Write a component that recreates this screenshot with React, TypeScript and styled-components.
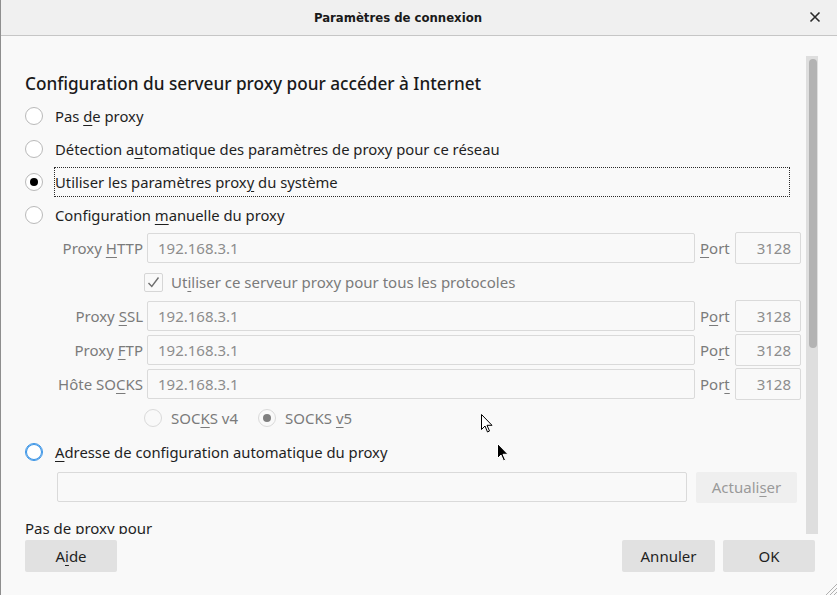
import React from 'react';
import styled, { createGlobalStyle } from 'styled-components';

const GlobalStyle = createGlobalStyle`
  html, body {
    margin: 0;
    padding: 0;
    background: #f9f9f9;
  }
  body {
    font-family: 'Noto Sans', 'DejaVu Sans', sans-serif;
    font-size: 15px;
    color: #1f1f1f;
    overflow: hidden;
  }
`;

interface IField {
  before: string;
  key: string;
  after: string;
  port: [string, string, string];
}

const FIELDS: IField[] = [
  { before: 'Proxy ', key: 'H', after: 'TTP', port: ['', 'P', 'ort'] },
  { before: 'Proxy ', key: 'S', after: 'SL', port: ['P', 'o', 'rt'] },
  { before: 'Proxy ', key: 'F', after: 'TP', port: ['Po', 'r', 't'] },
  { before: 'Hôte SO', key: 'C', after: 'KS', port: ['Por', 't', ''] },
];

const App: React.FC = () => {
  const renderField = (f: IField) => (
    <FieldRow key={f.before + f.key}>
      <FieldLabel>
        {f.before}
        <Key>{f.key}</Key>
        {f.after}
      </FieldLabel>
      <TextInput readOnly value="192.168.3.1" />
      <PortLabel>
        {f.port[0]}
        <Key>{f.port[1]}</Key>
        {f.port[2]}
      </PortLabel>
      <PortInput readOnly value="3128" />
    </FieldRow>
  );

  return (
    <Window>
      <GlobalStyle />
      <TitleBar>
        <Title>Paramètres de connexion</Title>
        <CloseButton>
          <svg width="12" height="12" viewBox="0 0 12 12">
            <path d="M1.5 1.5 L10.5 10.5 M10.5 1.5 L1.5 10.5" stroke="#2a2a2a" strokeWidth="1.6" />
          </svg>
        </CloseButton>
      </TitleBar>

      <Body>
        <ScrollView>
          <Heading>Configuration du serveur proxy pour accéder à Internet</Heading>

          <RadioRow>
            <Radio />
            <OptionLabel>
              Pas <Key>d</Key>e proxy
            </OptionLabel>
          </RadioRow>
          <RadioRow>
            <Radio />
            <OptionLabel>
              Détection a<Key>u</Key>tomatique des paramètres de proxy pour ce réseau
            </OptionLabel>
          </RadioRow>
          <RadioRow>
            <Radio $checked />
            <OptionLabel $focused>
              Utiliser les paramètres prox<Key>y</Key> du système
            </OptionLabel>
          </RadioRow>
          <RadioRow>
            <Radio />
            <OptionLabel>
              Configuration <Key>m</Key>anuelle du proxy
            </OptionLabel>
          </RadioRow>

          {renderField(FIELDS[0])}

          <CheckRow>
            <Checkbox>
              <svg width="13" height="13" viewBox="0 0 13 13">
                <path d="M1.5 7 L4.8 10.5 L11.5 1.5" fill="none" stroke="#6e6e6e" strokeWidth="1.4" />
              </svg>
            </Checkbox>
            <DimText>
              Ut<Key>i</Key>liser ce serveur proxy pour tous les protocoles
            </DimText>
          </CheckRow>

          {FIELDS.slice(1).map(renderField)}

          <SocksRow>
            <Radio $disabled />
            <DimText>
              SOC<Key>K</Key>S v4
            </DimText>
            <Radio $disabled $checked />
            <DimText>
              SOCKS <Key>v</Key>5
            </DimText>
          </SocksRow>

          <RadioRow>
            <Radio $hover />
            <OptionLabel>
              <Key>A</Key>dresse de configuration automatique du proxy
            </OptionLabel>
          </RadioRow>

          <PacRow>
            <PacInput readOnly value="" />
            <SmallButton disabled>
              Actuali<Key>s</Key>er
            </SmallButton>
          </PacRow>

          <SectionText>Pas de proxy pour</SectionText>
        </ScrollView>

        <ScrollTrack>
          <ScrollThumb />
        </ScrollTrack>
      </Body>

      <Footer>
        <Button>
          A<Key>i</Key>de
        </Button>
        <Spacer />
        <Button $wide>Annuler</Button>
        <Button>OK</Button>
      </Footer>

      <Cursor style={{ left: 480, top: 414 }}>
        <svg width="13" height="20" viewBox="0 0 13 20">
          <path d="M0.5 0.5 L0.5 15.5 L4 12 L6.5 18 L8.5 17 L6 11.3 L11 11.3 Z" fill="#fff" stroke="#000" strokeWidth="1" />
        </svg>
      </Cursor>
      <Cursor style={{ left: 496, top: 443 }}>
        <svg width="13" height="20" viewBox="0 0 13 20">
          <path d="M0.5 0.5 L0.5 15.5 L4 12 L6.5 18 L8.5 17 L6 11.3 L11 11.3 Z" fill="#000" stroke="#fff" strokeWidth="1" />
        </svg>
      </Cursor>

      <Grip>
        <svg width="12" height="12" viewBox="0 0 12 12">
          <path d="M12 1 L1 12 M12 5 L5 12 M12 9 L9 12" stroke="#b0b0b0" strokeWidth="1" />
        </svg>
      </Grip>
    </Window>
  );
};

const Window = styled.div`
  position: relative;
  width: 837px;
  height: 595px;
  box-sizing: border-box;
  border-left: 1px solid #8e8e8e;
  background: #f9f9f9;
  display: flex;
  flex-direction: column;
`;

const TitleBar = styled.div`
  height: 35px;
  flex: none;
  background: #f0f0f0;
  border-bottom: 1px solid #c6c6c6;
  display: flex;
  align-items: center;
  justify-content: center;
  position: relative;
  padding-right: 42px;
`;

const Title = styled.div`
  font-family: 'DejaVu Sans Condensed', 'DejaVu Sans', sans-serif;
  font-weight: bold;
  font-size: 13px;
  color: #1a1a1a;
`;

const CloseButton = styled.div`
  position: absolute;
  right: 16px;
  top: 11px;
  width: 12px;
  height: 12px;
  display: flex;
`;

const Body = styled.div`
  display: flex;
  padding-top: 20px;
  height: 478px;
  flex: none;
`;

const ScrollView = styled.div`
  flex: 1;
  overflow: hidden;
  padding: 0 5px 0 24px;
`;

const ScrollTrack = styled.div`
  width: 12px;
  background: #dedede;
  margin-right: 19px;
  padding: 3px 0 0 3px;
  box-sizing: border-box;
`;

const ScrollThumb = styled.div`
  width: 8px;
  height: 289px;
  border-radius: 4px;
  background: #b3b3b3;
`;

const Heading = styled.div`
  font-size: 17.2px;
  font-weight: 500;
  line-height: 24px;
  margin: 16px 0 3px;
  color: #1a1a1a;
`;

const Key = styled.span`
  text-decoration: underline;
  text-underline-offset: 3px;
  text-decoration-thickness: 1px;
`;

const RadioRow = styled.div`
  height: 33px;
  display: flex;
  align-items: center;
`;

const Radio = styled.span<{ $checked?: boolean; $disabled?: boolean; $hover?: boolean }>`
  flex: none;
  width: 18px;
  height: 18px;
  box-sizing: border-box;
  border-radius: 50%;
  background: ${(p) => (p.$disabled ? '#f9f9f9' : '#ffffff')};
  border: 1px solid ${(p) => (p.$hover ? '#3a94e6' : p.$disabled ? '#dadada' : '#b9b9b9')};
  ${(p) => (p.$hover ? 'box-shadow: inset 0 0 0 1px #3a94e6;' : '')}
  display: flex;
  align-items: center;
  justify-content: center;
  margin-right: 11px;
  &::after {
    content: '';
    display: ${(p) => (p.$checked ? 'block' : 'none')};
    width: 8px;
    height: 8px;
    border-radius: 50%;
    background: ${(p) => (p.$disabled ? '#7f7f7f' : '#000')};
  }
`;

const OptionLabel = styled.span<{ $focused?: boolean }>`
  flex: 1;
  height: 30px;
  margin-right: 11px;
  box-sizing: border-box;
  border: 1px dotted ${(p) => (p.$focused ? '#2a2a2a' : 'transparent')};
  display: flex;
  align-items: center;
  white-space: pre;
  color: #1f1f1f;
  font-size: 14.8px;
`;

const FieldRow = styled.div`
  height: 34px;
  display: flex;
  align-items: center;
`;

const FieldLabel = styled.span`
  width: 118px;
  flex: none;
  text-align: right;
  color: #7b7b7b;
  margin-right: 4px;
  white-space: pre;
`;

const TextInput = styled.input`
  flex: 1;
  min-width: 0;
  height: 30px;
  box-sizing: border-box;
  border: 1px solid #dadada;
  border-radius: 2px;
  background: #f9f9f9;
  padding: 0 10px;
  font: inherit;
  color: #8d8d8d;
  outline: none;
`;

const PortLabel = styled.span`
  width: 30px;
  flex: none;
  margin: 0 5px 0 5px;
  color: #7b7b7b;
`;

const PortInput = styled(TextInput)`
  flex: none;
  width: 66px;
  height: 32px;
  text-align: right;
  padding: 0 9px 0 0;
`;

const CheckRow = styled.div`
  height: 34px;
  display: flex;
  align-items: center;
  padding-left: 119px;
`;

const Checkbox = styled.span`
  width: 19px;
  height: 19px;
  box-sizing: border-box;
  border: 1px solid #d6d6d6;
  border-radius: 2px;
  background: #f9f9f9;
  display: flex;
  align-items: center;
  justify-content: center;
  margin-right: 8px;
`;

const DimText = styled.span`
  color: #7b7b7b;
  margin-right: 20px;
`;

const SocksRow = styled.div`
  height: 34px;
  display: flex;
  align-items: center;
  padding-left: 119px;
  & > ${Radio} {
    margin-right: 9px;
  }
`;

const PacRow = styled.div`
  height: 34px;
  display: flex;
  align-items: center;
  padding: 0 4px 0 32px;
  margin-top: 2px;
  gap: 9px;
`;

const PacInput = styled(TextInput)`
  height: 30px;
`;

const SmallButton = styled.button`
  width: 101px;
  height: 31px;
  flex: none;
  border: none;
  border-radius: 2px;
  background: #efefef;
  color: #9a9a9a;
  font: inherit;
  padding: 0;
`;

const SectionText = styled.div`
  margin-top: 14px;
  line-height: 20px;
  color: #1f1f1f;
`;

const Footer = styled.div`
  display: flex;
  align-items: center;
  padding: 6px 22px 0 24px;
  gap: 8px;
`;

const Spacer = styled.div`
  flex: 1;
`;

const Button = styled.button<{ $wide?: boolean }>`
  width: ${(p) => (p.$wide ? '93px' : '92px')};
  height: 32px;
  border: none;
  border-radius: 2px;
  background: #e1e1e1;
  color: #1f1f1f;
  font: inherit;
  padding: 0;
`;

const Cursor = styled.div`
  position: absolute;
  pointer-events: none;
  display: flex;
`;

const Grip = styled.div`
  position: absolute;
  right: 0;
  bottom: 0;
  display: flex;
`;

export default App;
